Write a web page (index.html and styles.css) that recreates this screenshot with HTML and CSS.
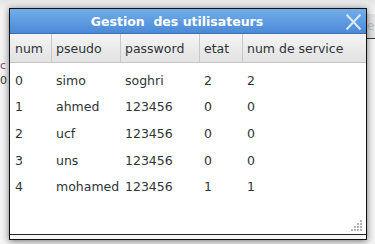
FILE: index.html
```html
<!DOCTYPE html>
<html lang="fr">
<head>
  <meta charset="UTF-8">
  <title>Gestion des utilisateurs</title>
  <link rel="stylesheet" href="styles.css">
</head>
<body>
  <div class="desk">
    <div class="back-left">
      <span class="c">c</span>
      <span>0</span>
    </div>
    <div class="back-right">e</div>

    <div class="window">
      <div class="titlebar">
        <span class="title">Gestion&nbsp; des utilisateurs</span>
        <svg class="close" width="17" height="18" viewBox="0 0 17 18">
          <path d="M1.5 1.5 L15.5 16.5 M15.5 1.5 L1.5 16.5" stroke="#dce9f8" stroke-width="2" fill="none"/>
        </svg>
      </div>

      <div class="table">
        <div class="row head">
          <div class="cell c-num">num</div>
          <div class="cell c-pseudo">pseudo</div>
          <div class="cell c-pass">password</div>
          <div class="cell c-etat">etat</div>
          <div class="cell c-serv">num de service</div>
        </div>
        <div class="rows">
          <div class="row">
            <div class="cell c-num">0</div>
            <div class="cell c-pseudo">simo</div>
            <div class="cell c-pass">soghri</div>
            <div class="cell c-etat">2</div>
            <div class="cell c-serv">2</div>
          </div>
          <div class="row">
            <div class="cell c-num">1</div>
            <div class="cell c-pseudo">ahmed</div>
            <div class="cell c-pass">123456</div>
            <div class="cell c-etat">0</div>
            <div class="cell c-serv">0</div>
          </div>
          <div class="row">
            <div class="cell c-num">2</div>
            <div class="cell c-pseudo">ucf</div>
            <div class="cell c-pass">123456</div>
            <div class="cell c-etat">0</div>
            <div class="cell c-serv">0</div>
          </div>
          <div class="row">
            <div class="cell c-num">3</div>
            <div class="cell c-pseudo">uns</div>
            <div class="cell c-pass">123456</div>
            <div class="cell c-etat">0</div>
            <div class="cell c-serv">0</div>
          </div>
          <div class="row">
            <div class="cell c-num">4</div>
            <div class="cell c-pseudo">mohamed</div>
            <div class="cell c-pass">123456</div>
            <div class="cell c-etat">1</div>
            <div class="cell c-serv">1</div>
          </div>
        </div>
        <svg class="grip" width="12" height="12" viewBox="0 0 12 12">
          <g fill="#b4b4b4">
            <rect x="9" y="0" width="2" height="2"/>
            <rect x="6" y="3" width="2" height="2"/>
            <rect x="9" y="3" width="2" height="2"/>
            <rect x="3" y="6" width="2" height="2"/>
            <rect x="6" y="6" width="2" height="2"/>
            <rect x="9" y="6" width="2" height="2"/>
            <rect x="0" y="9" width="2" height="2"/>
            <rect x="3" y="9" width="2" height="2"/>
            <rect x="6" y="9" width="2" height="2"/>
            <rect x="9" y="9" width="2" height="2"/>
          </g>
        </svg>
      </div>
      <div class="foot"></div>
    </div>
  </div>
</body>
</html>
```

FILE: styles.css
```css
body {
  margin: 0;
  padding: 0;
  font-family: "DejaVu Sans", sans-serif;
  background-color: #f2f2f2;
  overflow: hidden;
}
.desk {
  position: relative;
  width: 375px;
  height: 244px;
  background: linear-gradient(#e6e6e6, #f4f4f4 12px, #f4f4f4);
}
.back-left {
  position: absolute;
  left: 0;
  top: 60px;
  display: flex;
  flex-direction: column;
  gap: 4px;
  font-size: 11px;
  line-height: 11px;
  color: #333;
}
.back-left .c {
  color: #8a4a6a;
}
.back-right {
  position: absolute;
  left: 367px;
  top: 14px;
  width: 8px;
  height: 24px;
  font-size: 12px;
  line-height: 24px;
  color: #bdbdbd;
  background: #e4e4e4;
  border-bottom: 1px solid #333;
}
.window {
  position: absolute;
  left: 9px;
  top: 8px;
  width: 356px;
  border: 1px solid #111;
  background-color: #f4f4f4;
  box-shadow: 0 1px 7px rgba(0, 0, 0, 0.55);
}
.titlebar {
  position: relative;
  height: 24px;
  background: linear-gradient(#72aeea, #4b8ad6);
  border-bottom: 1px solid #3a6fb4;
  display: flex;
  align-items: center;
  justify-content: center;
}
.title {
  color: #fff;
  font-weight: bold;
  font-size: 12.5px;
  margin-left: -22px;
}
.close {
  position: absolute;
  right: 4px;
  top: 4px;
}
.table {
  position: relative;
  background-color: #fff;
  height: 200px;
  border-bottom: 1px solid #222;
}
.row {
  display: flex;
  height: 26.6px;
  align-items: center;
  font-size: 12.5px;
  color: #2e3436;
}
.row.head {
  height: 28px;
  background: linear-gradient(#f4f4f4, #e2e2e2);
  border-bottom: 1px solid #c4c4c4;
}
.rows {
  padding-top: 4px;
}
.cell {
  padding-left: 4px;
  box-sizing: border-box;
  white-space: nowrap;
}
.head .cell {
  height: 100%;
  display: flex;
  align-items: center;
  border-right: 1px solid #c8c8c8;
}
.c-num {
  width: 42px;
  padding-left: 5px;
}
.c-pseudo {
  width: 69px;
}
.c-pass {
  width: 79px;
}
.c-etat {
  width: 43px;
}
.c-serv {
  flex: 1;
}
.head .c-serv {
  border-right: none;
}
.grip {
  position: absolute;
  right: 3px;
  bottom: 2px;
}
.foot {
  height: 4px;
  background-color: #f6f6f6;
}
```
